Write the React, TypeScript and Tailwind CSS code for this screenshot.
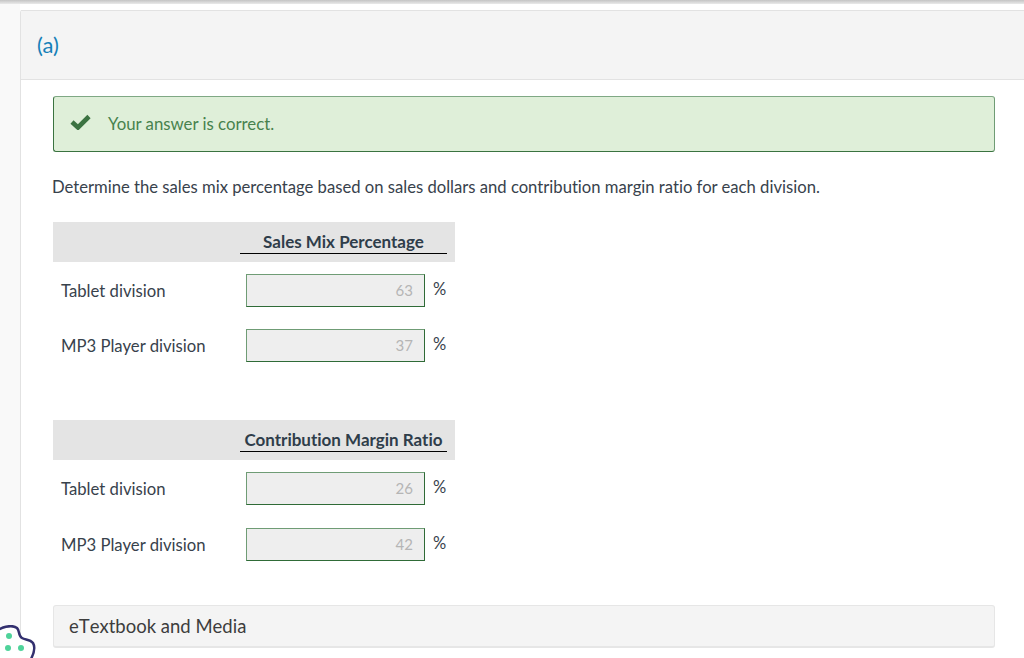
const font = "font-['Lato','Noto_Sans',sans-serif] [font-variant-ligatures:none]";

function Row({ label, value, last, tall }: { label: string; value: string; last?: boolean; tall?: boolean }) {
  return (
    <div className={`flex items-center h-[33px] ${last ? "" : tall ? "mb-[23px]" : "mb-[22px]"}`}>
      <div className="w-[193px] pl-2 text-[16.7px] leading-[20px] text-[#38424c]">{label}</div>
      <div className="w-[179px] h-[33px] border border-[#2f6b37] border-t-[#6f9c75] border-l-[#6f9c75] bg-[#eeeeee] flex items-center justify-end pr-[11px] text-[15px] text-[#b5b5b5]">
        {value}
      </div>
      <div className="ml-[8px] text-[16.5px] leading-[20px] text-[#38424c] -translate-y-[2px]">%</div>
    </div>
  );
}

function Block({ title, rows, className, tall }: { title: string; rows: [string, string][]; className?: string; tall?: boolean }) {
  return (
    <div className={className}>
      <div className="w-[402px] h-[40px] bg-[#e4e4e4] flex">
        <div className="ml-[187px] w-[207px] h-[32px] border-b border-black flex items-end justify-center text-[17px] leading-[24px] font-bold text-[#2f3d4a] -mb-px">
          <span className="translate-y-[1px]">{title}</span>
        </div>
      </div>
      <div className="pt-[12px]">
        {rows.map(([l, v], i) => (
          <Row key={i} label={l} value={v} tall={tall} last={i === rows.length - 1} />
        ))}
      </div>
    </div>
  );
}

export default function App() {
  return (
    <div className={`relative w-[1024px] h-[658px] overflow-hidden bg-white ${font}`}>
      <div className="h-[4px] bg-gradient-to-b from-[#c4c4c4] to-[#eaeaea]" />
      <div className="flex h-[654px] bg-[#f9f9f9]">
        <div className="w-[20px] shrink-0" />
        <div className="flex-1 flex flex-col">
          <div className="h-[6px] bg-white" />
          <div className="flex-1 bg-white border-l border-[#e2e2e2] rounded-tl-[3px]">
            <div className="h-[70px] bg-[#f4f4f4] border-t border-b border-[#e2e2e2] pl-[16px] pt-[21px] text-[22px] leading-[26px] text-[#1580b8]">
              (a)
            </div>
            <div className="pl-[32px] pt-[16px]">
              <div className="w-[942px] h-[56px] rounded-[3px] border border-[#3a7340] border-t-[#7fa884] border-r-[#6f9c75] bg-[#dfefd9] flex items-center">
                <svg width="21" height="16" viewBox="0 0 21 16" className="ml-[16px] -translate-y-[2px]">
                  <path d="M2 8 L8 13.5 L19 2.5" fill="none" stroke="#3c7342" strokeWidth="4.6" />
                </svg>
                <span className="ml-[17px] text-[16.8px] leading-[20px] text-[#47824d]">Your answer is correct.</span>
              </div>
              <p className="mt-[25px] -ml-px text-[16.65px] leading-[20px] text-[#38424c]">
                Determine the sales mix percentage based on sales dollars and contribution margin ratio for each division.
              </p>
              <Block
                className="mt-[25px]"
                title="Sales Mix Percentage"
                rows={[["Tablet division", "63"], ["MP3 Player division", "37"]]}
              />
              <Block
                className="mt-[58px]"
                tall
                title="Contribution Margin Ratio"
                rows={[["Tablet division", "26"], ["MP3 Player division", "42"]]}
              />
              <div className="mt-[44px] w-[942px] h-[43px] rounded-[3px] border border-[#e6e6e6] border-b-2 bg-[#f4f4f4] pl-[15px] flex items-center text-[18.5px] leading-[24px] text-[#3d3d3d] [font-kerning:none]">
                eTextbook and Media
              </div>
            </div>
          </div>
        </div>
      </div>
      <svg width="36" height="34" viewBox="0 0 36 34" className="absolute left-0 top-[625px]">
        <path d="M-6 8 C0 2 12 -1 17 3 C20 6 18 11 22 13 C25 15 30 14 33 18 C36 23 33 30 31 34" fill="white" stroke="#33306f" strokeWidth="2.5" />
        <path d="M-6 8 L-6 34 L31 34 Z" fill="white" />
        <circle cx="9" cy="11" r="3" fill="#4fd39a" />
        <circle cx="8" cy="23" r="3" fill="#4fd39a" />
        <circle cx="21" cy="23" r="3" fill="#4fd39a" />
      </svg>
    </div>
  );
}
